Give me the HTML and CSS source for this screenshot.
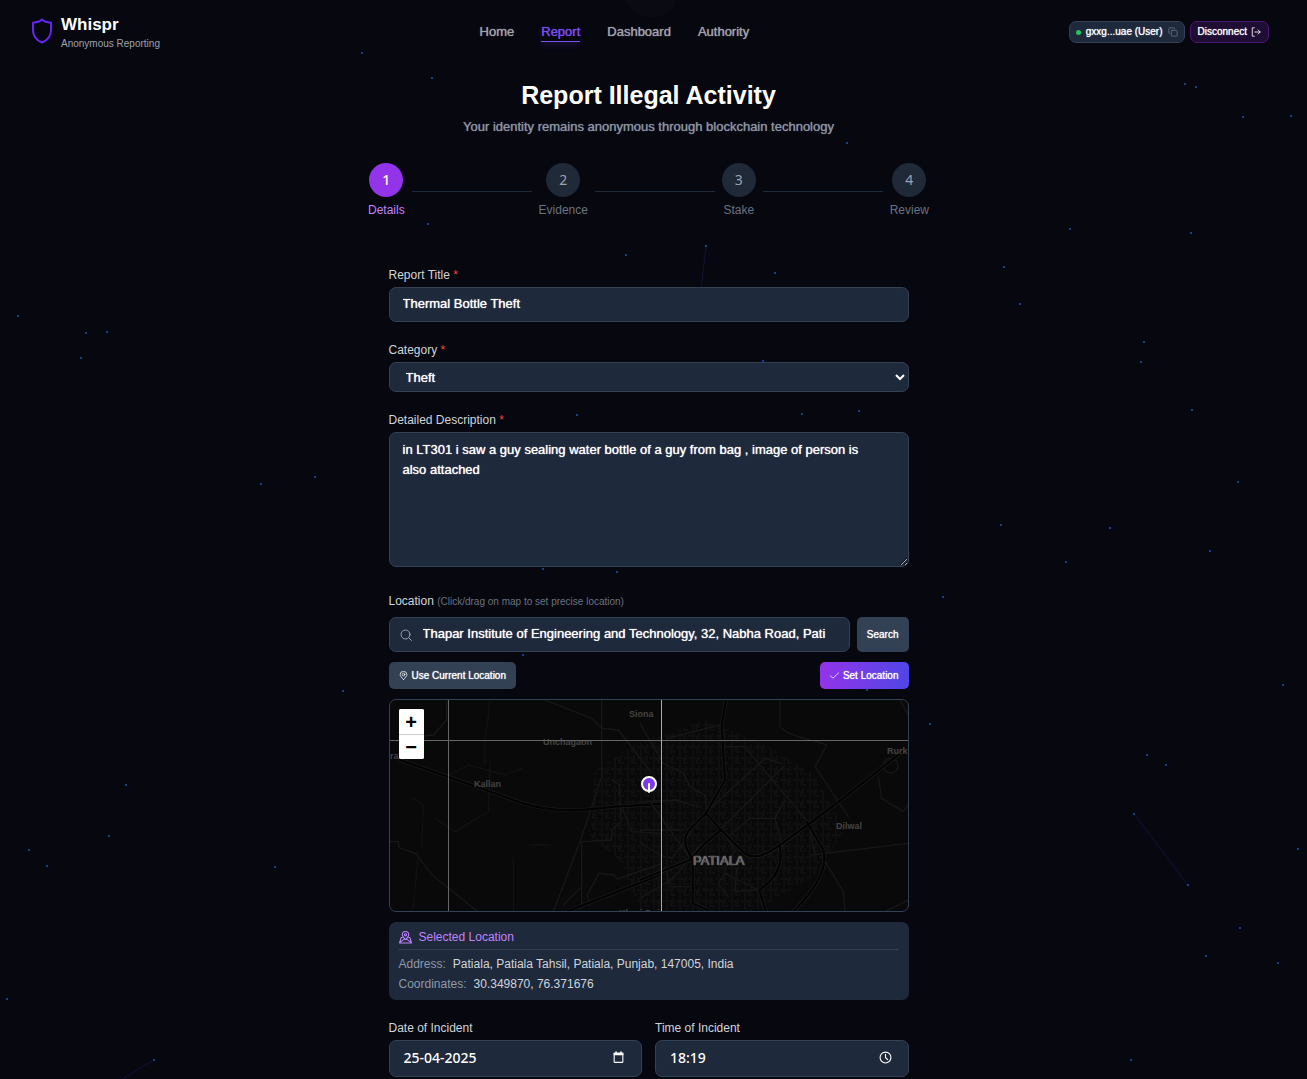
FILE: index.html
```html
<!DOCTYPE html>
<html lang="en">
<head>
<meta charset="utf-8">
<meta name="viewport" content="width=device-width, initial-scale=1">
<title>Whispr - Report Illegal Activity</title>
<link rel="stylesheet" href="styles.css">
</head>
<body>
<svg class="particles" aria-hidden="true">
  <circle class="halo" cx="651" cy="-10" r="28"/>
  <g class="links">
    <path d="M706 246 L701 290"/><path d="M1134 814 L1188 885"/><path d="M154 1060 L122 1079"/>
  </g>
  <g class="dots">
    <circle cx="362" cy="53" r="1"/><circle cx="432" cy="78" r="1"/><circle cx="847" cy="143" r="1"/>
    <circle cx="1185" cy="84" r="1"/><circle cx="1196" cy="87" r="1"/><circle cx="1243" cy="117" r="1"/>
    <circle cx="1291" cy="116" r="1"/><circle cx="428" cy="224" r="1"/><circle cx="626" cy="255" r="1"/>
    <circle cx="706" cy="246" r="1"/><circle cx="775" cy="273" r="1"/><circle cx="1070" cy="229" r="1"/>
    <circle cx="1191" cy="233" r="1"/><circle cx="1004" cy="267" r="1"/><circle cx="1020" cy="304" r="1"/>
    <circle cx="18" cy="316" r="1"/><circle cx="86" cy="333" r="1"/><circle cx="107" cy="332" r="1"/>
    <circle cx="81" cy="358" r="1"/><circle cx="763" cy="361" r="1"/><circle cx="1144" cy="342" r="1"/>
    <circle cx="1141" cy="362" r="1"/><circle cx="577" cy="415" r="1"/><circle cx="802" cy="414" r="1"/>
    <circle cx="859" cy="411" r="1"/><circle cx="1192" cy="410" r="1"/><circle cx="261" cy="484" r="1"/>
    <circle cx="315" cy="477" r="1"/><circle cx="1238" cy="482" r="1"/><circle cx="1001" cy="525" r="1"/>
    <circle cx="1110" cy="528" r="1"/><circle cx="1210" cy="551" r="1"/><circle cx="1066" cy="562" r="1"/>
    <circle cx="543" cy="569" r="1"/><circle cx="617" cy="572" r="1"/><circle cx="943" cy="597" r="1"/>
    <circle cx="523" cy="655" r="1"/><circle cx="343" cy="691" r="1"/><circle cx="867" cy="690" r="1"/>
    <circle cx="1283" cy="685" r="1"/><circle cx="930" cy="724" r="1"/><circle cx="1147" cy="755" r="1"/>
    <circle cx="1166" cy="765" r="1"/><circle cx="126" cy="785" r="1"/><circle cx="109" cy="836" r="1"/>
    <circle cx="29" cy="850" r="1"/><circle cx="47" cy="866" r="1"/><circle cx="275" cy="867" r="1"/>
    <circle cx="1134" cy="814" r="1"/><circle cx="1188" cy="885" r="1"/><circle cx="1298" cy="849" r="1"/>
    <circle cx="1240" cy="928" r="1"/><circle cx="1206" cy="956" r="1"/><circle cx="1278" cy="963" r="1"/>
    <circle cx="7" cy="999" r="1"/><circle cx="154" cy="1060" r="1"/><circle cx="1131" cy="1060" r="1"/>
  </g>
</svg>

<header class="topbar">
  <a class="brand" href="#">
    <svg class="brand-icon" viewBox="0 0 24 28" aria-hidden="true"><path d="M12 2.500 C9.500 5 6 5.500 3 5.700 V13 C3 19.500 7 23.500 12 25.500 C17 23.500 21 19.500 21 13 V5.700 C18 5.500 14.500 5 12 2.500 Z"/></svg>
    <span class="brand-text">
      <span class="brand-name">Whispr</span>
      <span class="brand-tag">Anonymous Reporting</span>
    </span>
  </a>
  <nav class="nav">
    <a href="#">Home</a>
    <a class="active" href="#">Report</a>
    <a href="#">Dashboard</a>
    <a href="#">Authority</a>
  </nav>
  <div class="account">
    <button class="pill user" type="button">
      <span class="status"></span>gxxg...uae (User)
      <svg class="pill-icon copy" viewBox="0 0 24 24" aria-hidden="true"><rect x="8" y="8" width="14" height="14" rx="2"/><path d="M4 16c-1.100 0-2-.9-2-2V4c0-1.100.9-2 2-2h10c1.100 0 2 .9 2 2"/></svg>
    </button>
    <button class="pill disconnect" type="button">Disconnect
      <svg class="pill-icon" viewBox="0 0 24 24" aria-hidden="true"><path d="M8 2H3v20h5M9 12h13M17 7l5 5-5 5"/></svg>
    </button>
  </div>
</header>

<main class="page">
  <h1>Report Illegal Activity</h1>
  <p class="subtitle">Your identity remains anonymous through blockchain technology</p>

  <ol class="stepper">
    <li class="step current"><span class="step-number">1</span>Details</li>
    <li class="step-line" aria-hidden="true"></li>
    <li class="step"><span class="step-number">2</span>Evidence</li>
    <li class="step-line" aria-hidden="true"></li>
    <li class="step"><span class="step-number">3</span>Stake</li>
    <li class="step-line" aria-hidden="true"></li>
    <li class="step"><span class="step-number">4</span>Review</li>
  </ol>

  <form class="form">
    <div class="field">
      <label for="title">Report Title <span class="required">*</span></label>
      <input class="control" id="title" type="text" value="Thermal Bottle Theft">
    </div>
    <div class="field">
      <label for="category">Category <span class="required">*</span></label>
      <select class="control" id="category"><option>Theft</option></select>
    </div>
    <div class="field field-description">
      <label for="description">Detailed Description <span class="required">*</span></label>
      <textarea class="control" id="description">in LT301 i saw a guy sealing water bottle of a guy from bag , image of person is also attached</textarea>
    </div>

    <div class="location">
      <label for="place">Location <span class="hint">(Click/drag on map to set precise location)</span></label>
      <div class="search-row">
        <div class="search-box">
          <svg class="search-icon" viewBox="0 0 24 24" aria-hidden="true"><circle cx="11" cy="11" r="9"/><path d="M18 18l5 5"/></svg>
          <input class="control" id="place" type="text" value="Thapar Institute of Engineering and Technology, 32, Nabha Road, Pati">
        </div>
        <button class="button" type="button">Search</button>
      </div>
      <div class="action-row">
        <button class="button" type="button">
          <svg class="button-icon" viewBox="0 0 24 24" aria-hidden="true"><path d="M12 23C7 17 3 14 3 9.500a9 8.500 0 0 1 18 0C21 14 17 17 12 23Z"/><circle cx="12" cy="9.500" r="3.500"/></svg>Use Current Location
        </button>
        <button class="button primary" type="button">
          <svg class="button-icon" viewBox="0 0 24 24" aria-hidden="true"><path d="M1 13l7 6L23 5"/></svg>Set Location
        </button>
      </div>

      <div class="map">
        <svg class="map-canvas" viewBox="0 0 518 211" preserveAspectRatio="xMidYMid slice" role="img" aria-label="Map of Patiala">
          <defs>
            <pattern id="blocks" width="13" height="11" patternUnits="userSpaceOnUse"><path d="M0 3h8v5h5M4 0v11M10 0v5" fill="none" stroke="#0f0f0f"/></pattern>
          </defs>
          <path class="built-up" d="M205 70l40-25 70-25 60 25 50 30 30 55-30 45-60 36H250l-20-50-30-25z" fill="url(#blocks)"/>
          <g transform="translate(-10 -5) scale(.33333)">
            <g class="lane">
              <path d="M30 440h25l2 18 50 18 50 65 150 120M200 15v60l-40 45-80 8M495 15l140 55 30 30 50 5 100 130M665 15v230l-60 180-85 225M605 640V440l90-5 0-30 28-25-5-110-20-15M725 335l30 75 85 5M550 630l55-55v-130M630 630l-8-30 35-65 45 5 10 12 130-45"/>
            </g>
            <g class="lane faint">
              <path d="M100 310l30 20-5 130M165 370l60 40 100-60 5-150M330 15l-15 130 0 60M450 450h60M400 490v160M205 240l60-30 110 30 50-20M115 470L100 640"/>
            </g>
            <g class="road-edge"><path d="M60 195l200 70 170 60q80 25 175 20l100-10 135-8M560 650l280-110"/></g>
            <g class="road"><path d="M60 195l200 70 170 60q80 25 175 20l100-10 135-8M560 650l280-110"/></g>
          </g>
          <g transform="translate(250 -5) scale(.33333)">
            <g class="lane">
              <path d="M0 320l110-5 60 20M0 85l70 120 60 30 20 40 45 25 5 40M420 15v80q20 25 110 45l30 10-35 65 100 150M245 155h68l190 225M200 350l175-160 50 15M240 405l190-190M270 420l60-50h75l30-55M405 370l25 90M515 480l290-35M505 380l20 100M80 530l10 45h70M290 520l-5 70 70-5M355 585l-100-50-20 30 30 40M550 490l60 100 5 60M805 615l-70 35M715 245l10 65 65 40 20-30M780 15l25 45M80 130l160-40M0 405h130M30 320l120 170M0 440q80 60 100 45l55-75M245 405l40 60-30 60M180 450l-80 100-100 60"/>
              <circle cx="752" cy="212" r="22"/>
            </g>
            <g class="road-edge"><path d="M258 15l-13 75 10 165-57 100M0 555l150-60 45-50 48-40 55 55q40 50 115-5l110-80 80-60 190-150M198 355l45 50M198 355l-50 50q-25 30 0 70l10 25v125l45 20M418 450q20 80-60 135l20 65M500 380l50 85q20 75-90 185"/></g>
            <g class="road"><path d="M258 15l-13 75 10 165-57 100M0 555l150-60 45-50 48-40 55 55q40 50 115-5l110-80 80-60 190-150M198 355l45 50M198 355l-50 50q-25 30 0 70l10 25v125l45 20M418 450q20 80-60 135l20 65M500 380l50 85q20 75-90 185"/></g>
          </g>
          <g class="places">
            <text x="239" y="17">Siona</text><text x="153" y="45">Unchagaon</text><text x="84" y="87">Kallan</text>
            <text x="0" y="59">ra</text><text x="497" y="54">Rurk</text><text x="446" y="129">Dilwal</text>
            <text x="229" y="216">Kheri Gujran</text><text class="city" x="303" y="165">PATIALA</text>
          </g>
          <g class="seams"><path d="M58.500 0V211M0 40.500H518"/><path class="bright" d="M271.500 0V211"/></g>
          <g class="pin"><circle cx="259" cy="84" r="7"/><path d="M259 84v8"/></g>
        </svg>
        <div class="zoom">
          <button type="button" aria-label="Zoom in">+</button>
          <button type="button" aria-label="Zoom out">−</button>
        </div>
      </div>

      <section class="selected">
        <h2>
          <svg class="selected-icon" viewBox="0 0 24 24" aria-hidden="true"><path d="M12 16C8 12 6 10 6 7a6 6 0 0 1 12 0c0 3-2 5-6 9Z"/><circle cx="12" cy="7" r="2"/><path d="M6 12H4L1 22h22l-3-10h-2M3 20l7-5M21 20l-7-5"/></svg>Selected Location
        </h2>
        <dl>
          <div><dt>Address:</dt><dd>Patiala, Patiala Tahsil, Patiala, Punjab, 147005, India</dd></div>
          <div><dt>Coordinates:</dt><dd>30.349870, 76.371676</dd></div>
        </dl>
      </section>
    </div>

    <div class="when">
      <div class="field">
        <label for="date">Date of Incident</label>
        <div class="picker control">
          <input id="date" type="text" value="25-04-2025">
          <svg viewBox="0 0 24 24" aria-hidden="true"><path class="solid" d="M3 3h18v5H3zM6 1h3v3H6zM15 1h3v3h-3z"/><rect x="4" y="4" width="16" height="17" rx="1"/></svg>
        </div>
      </div>
      <div class="field">
        <label for="time">Time of Incident</label>
        <div class="picker control">
          <input id="time" type="text" value="18:19">
          <svg viewBox="0 0 24 24" aria-hidden="true"><circle cx="12" cy="12" r="10"/><path d="M12 6v6l4 4"/></svg>
        </div>
      </div>
    </div>
  </form>
</main>
</body>
</html>
```
FILE: styles.css
```css
* { box-sizing: border-box; }

body {
  margin: 0;
  padding-right: 10px;
  background: #06070f;
  color: #fff;
  font: 13px/20px "Liberation Sans", Arial, sans-serif;
}

button, input, select, textarea { font: inherit; color: inherit; margin: 0; }
svg { fill: none; stroke: currentColor; stroke-width: 2; stroke-linecap: round; stroke-linejoin: round; }
a { color: inherit; text-decoration: none; }

.particles { position: absolute; inset: 0; width: 100%; height: 100%; z-index: -1; stroke: none; }
.dots { fill: #2454b0; }
.halo { fill: #090a12; }
.links { stroke: #15103a; stroke-width: 1; }

/* Header */
.topbar { display: flex; justify-content: space-between; align-items: center; height: 64px; padding: 0 28px 0 30px; }
.brand { display: flex; align-items: center; gap: 7px; padding-top: 2px; }
.brand-icon { width: 24px; height: 28px; color: #6425f5; margin-top: -4px; }
.brand-text { display: flex; flex-direction: column; }
.brand-name { font-size: 17px; line-height: 22px; font-weight: bold; }
.brand-tag { font-size: 10px; line-height: 16px; color: #9ca3af; }
.nav { display: flex; gap: 27px; color: #a3a3ad; text-shadow: 0 0 1px currentColor; }
.nav a { line-height: 18px; border-bottom: 1px solid transparent; }
.nav .active { color: #7c4df0; border-color: #7c4df0; box-shadow: 0 4px 6px #7c3aed22; }
.account { display: flex; gap: 5px; }
.pill { display: flex; align-items: center; gap: 5px; height: 22px; padding: 0 7px; border: 1px solid #334155; border-radius: 7px; background: #1e293b; font-size: 10px; text-shadow: 0 0 1px currentColor; }
.user { padding: 0 6px; }
.disconnect { gap: 4px; background: #1f0d33; border-color: #4a1a72; }
.status { width: 5px; height: 5px; border-radius: 50%; background: #22c55e; }
.pill-icon { width: 10px; height: 10px; }
.copy { color: #64748b; }

/* Title and steps */
.page { display: flex; flex-direction: column; align-items: center; padding: 14px 16px 2px; }
h1 { margin: 0; font-size: 25px; line-height: 34px; }
.subtitle { margin: 5px 0 26px; color: #8b93a1; text-shadow: 0 0 1px currentColor; }
.stepper { display: flex; align-items: center; width: 100%; max-width: 561px; margin: 0 0 47px; padding: 0; list-style: none; }
.step { display: flex; flex-direction: column; align-items: center; gap: 5px; font-size: 12px; line-height: 17px; color: #6b7280; }
.step-number { display: grid; place-items: center; width: 34px; height: 34px; border-radius: 50%; background: #1f2937; color: #9ca3af; font: 14px/20px "Noto Sans", sans-serif; }
.current { color: #c084fc; }
.current .step-number { background: #9333ea; color: #fff; font-weight: 500; }
.step-line { flex: 1; height: 1px; margin: 0 7px; background: #1f2937; }

/* Form */
.form { display: flex; flex-direction: column; gap: 19px; width: 100%; max-width: 520px; }
.field, .location { display: flex; flex-direction: column; }
label { margin-bottom: 2px; font-size: 12px; line-height: 19px; color: #d1d5db; }
.required { color: #ef4444; }
.hint { font-size: 10px; color: #6b7280; }
.control { width: 100%; height: 35px; padding: 0 13px 2px; border: 1px solid #334155; border-radius: 7px; background: #1e293b; outline: 0; text-shadow: 0 0 1px currentColor; }
select.control { height: 30px; padding: 0 12px; }
textarea.control { display: block; height: 135px; padding: 7px 26px 7px 13px; resize: vertical; }
.field-description { margin-bottom: 6px; }
.location label { margin-bottom: 6px; }

.search-row { display: flex; gap: 7px; }
.search-box { flex: 1; display: grid; align-items: center; }
.search-box > * { grid-area: 1 / 1; }
.search-box .control { padding-left: 33px; }
.search-icon { width: 12px; height: 12px; margin-left: 11px; color: #94a3b8; z-index: 1; }
.button { display: flex; align-items: center; justify-content: center; gap: 4px; padding: 0 10px; border: 0; border-radius: 5px; background: #334155; font-size: 10px; text-shadow: 0 0 1px currentColor; }
.button-icon { width: 9px; height: 9px; }
.action-row { display: flex; justify-content: space-between; height: 27px; margin: 10px 0; }
.primary { background: linear-gradient(90deg, #9333ea, #4f46e5); }

/* Map */
.map { position: relative; height: 213px; border: 1px solid #334155; border-radius: 7px; background: #090909; overflow: hidden; }
.map-canvas { display: block; width: 100%; height: 100%; }
.built-up { stroke: none; }
.lane { stroke: #171717; stroke-width: 4; }
.faint { stroke: #111; }
.road-edge { stroke: #1c1c1c; stroke-width: 11; }
.road { stroke: #030303; stroke-width: 7; }
.places { fill: #444; stroke: none; font-size: 9px; font-weight: bold; }
.places .city { font-size: 13px; font-weight: normal; fill: #555; text-shadow: 0 0 1px currentColor; }
.seams { stroke: #666; stroke-width: 1; stroke-linecap: butt; }
.seams .bright { stroke: #aaa; }
.pin { fill: #7c3aed; stroke: #fff; }
.zoom { position: absolute; left: 9px; top: 9px; display: grid; gap: 1px; background: #ccc; border-radius: 2px; overflow: hidden; }
.zoom button { width: 25px; height: 25px; padding: 0; border: 0; background: #fff; color: #000; font-size: 20px; line-height: 24px; font-weight: bold; }
.zoom button + button { height: 24px; }

/* Chosen place */
.selected { margin-top: 10px; padding: 5px 10px 6px; border-radius: 7px; background: #1e293b; font-size: 12px; }
h2 { display: flex; align-items: center; gap: 7px; margin: 0 0 4px; padding-bottom: 2px; border-bottom: 1px solid #334155; font-size: 12px; line-height: 20px; font-weight: normal; color: #c084fc; }
.selected-icon { width: 13px; height: 13px; }
dl { margin: 0; }
dl div { display: flex; gap: 7px; }
dt { color: #8f98a6; }
dd { margin: 0; color: #d1d5db; }

/* Date and time */
.when { display: grid; grid-template-columns: 1fr 1fr; gap: 13px; }
.picker { display: flex; align-items: center; height: 37px; padding: 0 16px 2px 14px; text-shadow: none; }
.picker input { flex: 1; min-width: 0; padding: 0; border: 0; outline: 0; background: none; font: 500 14px/20px "Noto Sans", sans-serif; }
.picker svg { width: 13px; height: 13px; }
.solid { fill: currentColor; stroke: none; }
```
